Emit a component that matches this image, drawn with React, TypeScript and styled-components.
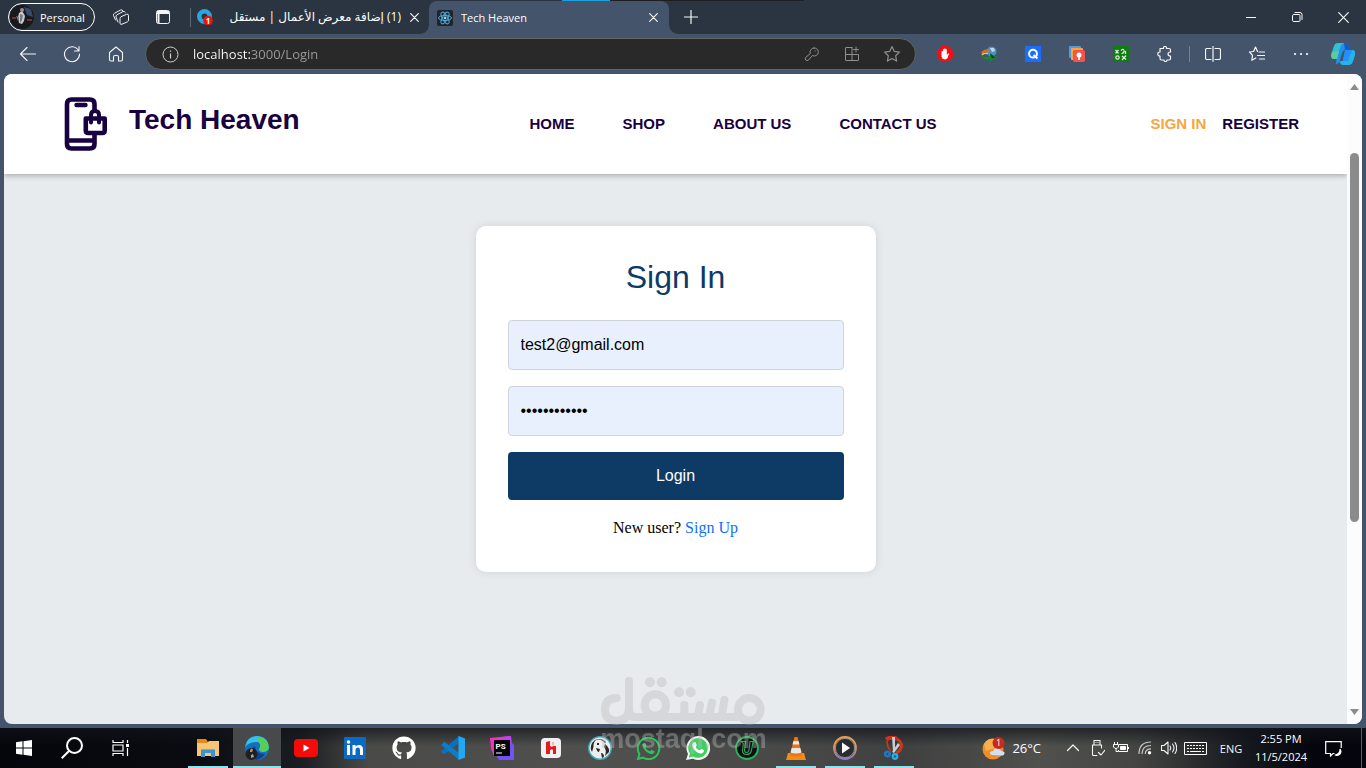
import React, { useState } from "react";
import styled, { createGlobalStyle, css } from "styled-components";
import { FaGithub, FaWhatsapp } from "react-icons/fa";

const ui = `"Open Sans", "Noto Sans", "DejaVu Sans", sans-serif`;
const sans = `"Liberation Sans", Arial, sans-serif`;

const GlobalStyle = createGlobalStyle`
  *, *::before, *::after { box-sizing: border-box; }
  body { margin: 0; background: #44546a; font-family: ${sans}; }
  button { border: 0; padding: 0; background: none; color: inherit; font: inherit; cursor: pointer; }
  a { text-decoration: none; }
  h1, h2, p { margin: 0; }
  svg { display: block; flex: none; }
`;

/* ---------- browser window ---------- */

const Desktop = styled.div`
  position: relative;
  display: flex;
  flex-direction: column;
  min-height: 100vh;
`;

const TabBar = styled.div`
  display: flex;
  align-items: stretch;
  height: 34px;
  padding-left: 8px;
  background: #2b3541;
  color: #fff;
  font: 11px ${ui};
`;

const ProfileButton = styled.button`
  display: flex;
  align-items: center;
  align-self: center;
  gap: 6px;
  width: 87px;
  height: 28px;
  padding-left: 1px;
  border: 1px solid #fff;
  border-radius: 14px;
`;

const BarButton = styled.button<{ $w?: number }>`
  display: flex;
  align-items: center;
  justify-content: center;
  flex: none;
  width: ${(p) => p.$w ?? 44}px;
  color: #f4f5f7;
`;

const ProfileGap = styled.div`
  width: 5px;
`;

const Tab = styled.div<{ $active?: boolean }>`
  position: relative;
  display: flex;
  align-items: center;
  gap: 8px;
  width: 240px;
  padding: 0 10px 0 8px;
  ${(p) =>
    p.$active
      ? css`
          margin-top: 1px;
          border-radius: 8px 8px 0 0;
          background: #44546a;
          &::before,
          &::after {
            content: "";
            position: absolute;
            bottom: 0;
            width: 8px;
            height: 8px;
          }
          &::before {
            right: 100%;
            background: radial-gradient(circle at 0 0, transparent 7px, #44546a 8px);
          }
          &::after {
            left: 100%;
            background: radial-gradient(circle at 100% 0, transparent 7px, #44546a 8px);
          }
        `
      : css`
          &::before {
            content: "";
            position: absolute;
            left: 1px;
            top: 8px;
            bottom: 7px;
            width: 1px;
            background: #5d6672;
          }
        `}
`;

const TabTitle = styled.span`
  flex: 1;
  white-space: nowrap;
  overflow: hidden;
  line-height: 18px;
  &[dir="rtl"] {
    font-family: "Open Sans", "DejaVu Sans", sans-serif;
    font-size: 12px;
  }
`;

const Spacer = styled.div`
  flex: 1;
`;

const CaptureStrip = styled.div`
  position: absolute;
  top: 0;
  left: 50%;
  width: 242px;
  height: 1px;
  transform: translateX(-50%);
  background: linear-gradient(90deg, #1ba1e2 20%, #1d1f22 20%);
`;

const Toolbar = styled.div`
  display: flex;
  height: 40px;
  padding: 0 3px 0 6px;
  background: #44546a;
  color: #f4f5f7;
`;

const AddressBar = styled.div`
  display: flex;
  align-items: center;
  flex: 1;
  height: 32px;
  margin: 4px 7px 4px 7px;
  padding: 0 3px 0 16px;
  border: 1px solid #62645f;
  border-radius: 16px;
  background: #292929;
  ${BarButton} {
    color: #8f8f8f;
  }
`;

/* host name in white, the rest of the address in grey */
const Url = styled.input`
  flex: 1;
  min-width: 0;
  height: 20px;
  margin-left: 14px;
  padding: 0;
  border: 0;
  background: linear-gradient(90deg, #fff 58px, #9c9c9c 58px);
  background-clip: text;
  -webkit-background-clip: text;
  color: transparent;
  caret-color: #fff;
  font: 13px/20px ${ui};
  outline: 0;
`;

const Separator = styled.div`
  align-self: center;
  width: 1px;
  height: 16px;
  margin: 0 1px 0 2px;
  background: #77828f;
`;

const PageFrame = styled.div`
  display: flex;
  flex: 1;
  margin: 0 4px 4px;
  border-radius: 8px;
  overflow: hidden;
  background: #e7ebee;
`;

const Page = styled.div`
  flex: 1;
  min-width: 0;
  overflow: hidden;
`;

const ScrollTrack = styled.div`
  display: flex;
  flex-direction: column;
  align-items: center;
  width: 15px;
  padding: 10px 0 9px;
  background: #fcfcfc;
`;

const ScrollPart = styled.div<{ $grow: number; $thumb?: boolean }>`
  flex: ${(p) => p.$grow} 0 0;
  width: 9px;
  border-radius: 5px;
  background: ${(p) => (p.$thumb ? "#8b8b8b" : "transparent")};
`;

/* ---------- shop page ---------- */

const SiteHeader = styled.header`
  position: relative;
  display: flex;
  align-items: center;
  justify-content: space-between;
  height: 100px;
  padding: 0 48px 0 60px;
  background: #fff;
  box-shadow: 0 2px 5px rgba(0, 0, 0, 0.25);
  color: #190041;
`;

const Brand = styled.a`
  display: flex;
  align-items: center;
  gap: 21px;
  padding-right: 16px;
  color: inherit;
`;

const BrandName = styled.h1`
  padding-bottom: 9px;
  font: bold 28px/32px ${sans};
`;

const Links = styled.nav<{ $gap: number }>`
  display: flex;
  gap: ${(p) => p.$gap}px;
`;

const NavLink = styled.a<{ $current?: boolean }>`
  color: ${(p) => (p.$current ? "#f5a742" : "#190041")};
  font: bold 15px/20px ${sans};
`;

const Main = styled.main`
  display: flex;
  justify-content: center;
  padding: 52px 16px;
`;

const Card = styled.form`
  display: flex;
  flex-direction: column;
  gap: 16px;
  width: 400px;
  padding: 32px;
  border-radius: 10px;
  background: #fff;
  box-shadow: 0 0 10px rgba(0, 0, 0, 0.1);
`;

const CardTitle = styled.h2`
  margin-bottom: 8px;
  color: #0d3b66;
  font: 32px/38px ${sans};
  text-align: center;
`;

const Field = styled.input`
  width: 100%;
  height: 50px;
  padding: 0 12px;
  border: 1px solid #ced4da;
  border-radius: 4px;
  background: #e8f0fe;
  color: #000;
  font: 16px ${sans};
  outline: 0;
`;

const LoginButton = styled.button`
  height: 48px;
  border-radius: 4px;
  background: #0d3b66;
  color: #fff;
  font: 16px ${sans};
`;

const Hint = styled.p`
  font: 16px/24px "Liberation Serif", "Times New Roman", serif;
  text-align: center;
  color: #000;
  a {
    color: #0d6efd;
  }
`;

/* ---------- taskbar ---------- */

const Taskbar = styled.footer`
  display: flex;
  height: 40px;
  background:
    linear-gradient(180deg, rgba(16, 20, 26, 0.7), rgba(16, 20, 26, 0) 45%),
    linear-gradient(90deg, #05060c 0%, #090b11 14%, #1a1d20 22%, #4a4b48 27%, #50504e 44%, #484947 58%, #3f4040 66%, #50514d 76%, #454643 83%, #16191e 91%, #05060d 96%);
  color: #fff;
  font: 11px ${ui};
`;

const Apps = styled.div`
  display: flex;
  flex: 1;
  padding-left: 39px;
`;

const AppButton = styled.button<{ $open?: boolean; $focused?: boolean }>`
  display: flex;
  align-items: center;
  justify-content: center;
  flex: none;
  width: 49px;
  position: relative;
  ${(p) =>
    p.$focused &&
    css`
      background: linear-gradient(90deg, transparent 1px, #47494a 1px);
    `}
  ${(p) =>
    p.$open &&
    css`
      &::after {
        content: "";
        position: absolute;
        left: ${p.$focused ? 1 : 5}px;
        right: ${p.$focused ? 0 : 4}px;
        bottom: 0;
        height: 2px;
        background: #8ee4ea;
      }
    `}
`;

const Weather = styled.button`
  display: flex;
  align-items: center;
  gap: 7px;
  margin-right: 20px;
  font: 13px ${ui};
`;

const Clock = styled.button`
  width: 56px;
  line-height: 18px;
  text-align: center;
  white-space: nowrap;
`;

const ShowDesktop = styled.button`
  width: 5px;
  margin-left: 4px;
  border-left: 1px solid #5c5d60;
`;

const Watermark = styled.div`
  position: absolute;
  left: 50%;
  bottom: 16px;
  width: 167px;
  margin-left: -83px;
  color: #bbb;
  opacity: 0.4;
  pointer-events: none;
  font: bold 27px/26px ${sans};
  text-align: center;
`;

/* ---------- drawings ---------- */

const Line = ({ d, s = 16, w = 1 }: { d: string; s?: number; w?: number }) => (
  <svg width={s} height={s} viewBox={`0 0 ${s} ${s}`} fill="none" stroke="currentColor" strokeWidth={w} strokeLinecap="round" strokeLinejoin="round">
    <path d={d} />
  </svg>
);

const Close = ({ s = 9 }: { s?: number }) => <Line s={s} d={`M.7.7 ${s - 0.7} ${s - 0.7}M${s - 0.7}.7.7 ${s - 0.7}`} w={1.2} />;

const Avatar = () => (
  <svg width="24" height="24" viewBox="0 0 24 24">
    <clipPath id="av"><circle cx="12" cy="12" r="12" /></clipPath>
    <g clipPath="url(#av)">
      <path fill="#17191d" d="M0 0h24v24H0z" />
      <path fill="#344a72" d="M14 2l7 2 2 8-6-2z" />
      <path fill="#733033" d="M2 12h4v2H2zM17 14h5v2h-5z" />
      <path fill="#c8c9cc" d="M9 8l3-2 2 3 1 2-1 5-2 3-3-1-1-6z" />
      <path fill="#777b83" d="M10 9l3 1-1 5-2 3zM6 11l3 1-1 4z" />
      <circle cx="12" cy="5" r="2" fill="#ab8d7e" />
    </g>
  </svg>
);

const Logo = () => (
  <svg width="44" height="54" viewBox="0 0 44 54" fill="none" stroke="#190041" strokeWidth="4.6" strokeLinejoin="round" strokeLinecap="round">
    <path d="M30.500 13V7q0-4.500-4.500-4.500H7.500Q3 2.500 3 7v40q0 4.500 4.500 4.500H26q4.500 0 4.500-4.500v-9" />
    <path d="M12.500 8h9M4 43.500h26" strokeWidth="4.400" />
    <path d="M21.800 21.500h18.900v12q0 2.500-2.500 2.500H24.300q-2.500 0-2.500-2.500z" />
    <path d="M27 25.500V18q0-4 4-4t4 4v7.500" strokeWidth="4" />
    <path d="M29.500 21.500h3" strokeWidth="3" />
  </svg>
);

const ReactIcon = () => (
  <svg width="16" height="16" viewBox="0 0 16 16">
    <rect width="16" height="16" rx="2" fill="#20232a" />
    <g fill="none" stroke="#4fa9d6" strokeWidth="1">
      <ellipse cx="8" cy="8" rx="6.500" ry="2.600" />
      <ellipse cx="8" cy="8" rx="6.500" ry="2.600" transform="rotate(60 8 8)" />
      <ellipse cx="8" cy="8" rx="6.500" ry="2.600" transform="rotate(120 8 8)" />
    </g>
    <circle cx="8" cy="8" r="1.400" fill="#8cd8f8" />
  </svg>
);

const MostaqlIcon = () => (
  <svg width="16" height="16" viewBox="0 0 16 16">
    <circle cx="7.500" cy="7.500" r="5.200" fill="none" stroke="#2aa5de" strokeWidth="4.600" />
    <circle cx="11" cy="11.500" r="4.800" fill="#e2160f" />
    <text x="11" y="14.500" fontSize="8" fontWeight="bold" fill="#fff" textAnchor="middle" fontFamily="Open Sans">1</text>
  </svg>
);

const AdBlock = () => (
  <svg width="16" height="16" viewBox="0 0 16 16">
    <path fill="#f40d12" d="M5 0h6l5 5v6l-5 5H5l-5-5V5z" />
    <path fill="#fff" d="M4.500 5.500q.8-.8 1.400 0V8V3.500q.8-.9 1.300 0V7V2.700q.8-.9 1.300 0V7V3.500q.8-.9 1.300 0V9l1.200-1.600q.9-.5 1 .3L10.500 12q-.8 1.400-2.600 1.400-2.800 0-3.400-2.600z" />
  </svg>
);

const Idm = () => (
  <svg width="16" height="16" viewBox="0 0 16 16">
    <circle cx="10.500" cy="5.500" r="5" fill="#4d8fc5" />
    <path d="M9 2h4l1 3-3 1z" fill="#b9dbe9" />
    <path d="M1 7.500q2-4 7-2.500" fill="none" stroke="#e26b1f" strokeWidth="2.200" />
    <path d="M1 9q2-2.500 6-1.500" fill="none" stroke="#e6c93b" strokeWidth="1.600" />
    <path d="M.5 9.500q3 3 8.500.5V7.500L16 11l-7 5v-2.500Q2 14.500.5 9.500z" fill="#158a33" />
    <path d="M9 7.500l5 4-3 1z" fill="#18341e" />
  </svg>
);

const QExt = () => (
  <svg width="16" height="16" viewBox="0 0 16 16">
    <path fill="#1a6dff" d="M0 0h16v16H0z" />
    <circle cx="8" cy="7.700" r="3.900" fill="none" stroke="#fff" strokeWidth="2" />
    <path d="M8.500 9l4 3.500" stroke="#fff" strokeWidth="2" />
  </svg>
);

const StackExt = () => (
  <svg width="16" height="16" viewBox="0 0 16 16">
    <rect width="12" height="12" rx="1" fill="#4b9fe1" />
    <rect x="2" y="2" width="12" height="12" rx="1" fill="#f9a33a" />
    <rect x="4" y="4" width="12" height="12" rx="2" fill="#f2544c" />
    <circle cx="10" cy="9" r="2.500" fill="#fff" />
    <path d="M9 11h2v3H9z" fill="#fde2df" />
  </svg>
);

const GreenExt = () => (
  <svg width="16" height="16" viewBox="0 0 16 16">
    <path fill="#107c10" d="M0 0h16v16H0z" />
    <g fill="none" stroke="#dff0df" strokeWidth="1.200">
      <path d="M2.500 4l3 3.500M5.500 4l-3 3.500M8 4.500q2.500-2.500 3 0t-2.500 3M12.500 5v3" />
      <circle cx="4.500" cy="11.500" r="1.700" />
      <path d="M9 10l4 3.500M13 9.500l-4 4.500" />
    </g>
  </svg>
);

const Copilot = () => (
  <svg width="24" height="24" viewBox="0 0 24 24">
    <path fill="#2092e9" d="M7 1h8q2 0 3 3l1 4h-5q-2 0-3 3l-2 7q-1 4-4 4z" />
    <path fill="#33c0d5" d="M7 1h6q-3 1-4 5L6 17H3q-3 0-3-4L3 4q1-3 4-3z" />
    <path fill="#5ccb9f" d="M1 10l7-1-2 8H3q-4 0-2-7z" />
    <path fill="#1659c9" d="M13 1h2q2 0 3 3l1 4h-5z" />
    <path fill="#248fff" d="M14 8h7q4 0 3 5l-2 6q-1 4-5 4h-5q-3 0-4-4l2 1q2 0 2-3z" />
    <path fill="#24b5e3" d="M9 19h8l4-11q4 0 3 5l-2 6q-1 4-5 4h-5q-2 0-3-4z" />
  </svg>
);

const Folder = () => (
  <svg width="22" height="20" viewBox="0 0 22 20">
    <path fill="#e68a12" d="M0 1h9l2 3h11v5H0z" />
    <path fill="#f8c574" d="M0 5h10l2-2h10v15H0z" />
    <path fill="#3c93d0" d="M4 11h14v8h-4v-4H8v4H4z" />
    <path fill="#64b0e3" d="M4 11h14v1H4z" />
  </svg>
);

const Edge = () => (
  <svg width="24" height="24" viewBox="0 0 24 24">
    <circle cx="12" cy="12" r="12" fill="#1470bf" />
    <path fill="#35c0e8" d="M0 11Q2 0 12 0q8 0 11 7l-10-1Q4 6 0 11z" />
    <path fill="#54cf5e" d="M14 1q10 2 10 11-1 4-6 4-4 0-4-3 3-5-2-8z" />
    <path fill="#123f8c" d="M10 10q0 8 10 8-3 5-9 6Q4 20 7 12z" />
    <circle cx="6.500" cy="18" r="6" fill="#202024" />
    <path fill="#b28e75" d="M5 14q2-3 3 0l-1 2H5z" />
    <path fill="#a3a3a3" d="M6 19l2-1 1 3-3 1z" />
  </svg>
);

const YouTube = () => (
  <svg width="24" height="18" viewBox="0 0 24 18">
    <rect width="24" height="18" rx="4" fill="#f60b0b" />
    <path fill="#fff" d="M9.500 5.500v7l6-3.500z" />
  </svg>
);

const LinkedIn = () => (
  <svg width="22" height="22" viewBox="0 0 22 22">
    <rect width="22" height="22" rx="1" fill="#0a6ac4" />
    <path fill="#fff" d="M3 8h3v10H3zM8.500 8h3v1.500Q12.500 8 15 8q4 0 4 4.500V18h-3v-5q0-2.500-2-2.500-2.500 0-2.500 2.500v5h-3z" />
    <circle cx="4.500" cy="5" r="1.800" fill="#fff" />
  </svg>
);

const VsCode = () => (
  <svg width="24" height="24" viewBox="0 0 24 24">
    <path fill="#0b6fc0" d="M18 0v7L3 18.500 0 16l1-1.500L17 1z" />
    <path fill="#0a7dcc" d="M3 5.500L18 17v7L.5 9z" />
    <path fill="#23a7f2" d="M17.500 0L24 2.500v19L17.500 24z" />
  </svg>
);

const PhpStorm = () => (
  <svg width="24" height="24" viewBox="0 0 24 24">
    <path fill="#ef35c0" d="M0 2l21-2 1 9L4 20 1 13z" />
    <path fill="#b945f0" d="M12 1l9-1v12l-9 2z" />
    <path fill="#7353f5" d="M4 16L22 7l2 2v15H9z" />
    <path fill="#050505" d="M4 4h16v16H4z" />
    <text x="5.500" y="12.500" fontSize="8" fontWeight="bold" fill="#fff" fontFamily="Roboto">PS</text>
    <path fill="#fff" d="M6 16.500h6v1H6z" />
  </svg>
);

const HIcon = () => (
  <svg width="20" height="20" viewBox="0 0 20 20">
    <rect width="20" height="20" rx="4" fill="#f1efef" />
    <path fill="#e51b1b" d="M5 4l4-1v5l2 1 1-1h3v8h-3v-4q-1.500-1.500-3 .5V16H5z" />
    <path fill="#f5b9a9" d="M11 4h2v3h-2z" />
  </svg>
);

const Beaver = () => (
  <svg width="24" height="24" viewBox="0 0 24 24">
    <circle cx="12" cy="12" r="11.300" fill="#eceff0" stroke="#3fa9b8" strokeWidth="1.400" />
    <path fill="#33251f" d="M8 4Q5 7 5.500 11L4 16Q1.500 12 4 7l3-3q6-3 11 2l-1 1Q13 2 8 4zM17 8q5 4 4 8l-4 4q2-6-1-9zM8 12l4 1-1 3q-2 0-3-4z" />
    <path fill="#33251f" d="M9 7h2v2H9zM13 17q3 0 3 4l-2 1z" />
  </svg>
);

const WhatsAppSolid = () => (
  <svg width="24" height="24" viewBox="0 0 24 24">
    <path fill="#f3f5f3" d="M12 0a12 12 0 1 1-5 22.800L0 24l2-6A12 12 0 0 1 12 0z" />
    <path fill="#3fcf60" d="M12 2.200a9.800 9.800 0 1 1-5 18.300L2.800 21.500 4 17.500A9.800 9.800 0 0 1 12 2.200z" />
    <path fill="#fff" d="M8 6.200h1.500l1.300 3-1.200 1.700q1.300 2.400 4 3.500l1.500-1.700 2.900 1.400q.3 2.500-2.200 3.300-3 .6-6.300-2.400-3.600-3.300-3.300-6.300.2-1.700 1.800-2.500z" />
  </svg>
);

const UIcon = () => (
  <svg width="24" height="24" viewBox="0 0 24 24">
    <circle cx="12" cy="12" r="11" fill="#0b1114" stroke="#2cb45a" strokeWidth="1.800" />
    <path d="M6.500 5.500h4L9.500 14q0 2.500 2 2.500t2.500-2.500l1-8.500h3l-1.500 9q-1 4-5 4t-4-4l.8-7z" fill="none" stroke="#39a55a" strokeWidth="1.100" />
  </svg>
);

const Vlc = () => (
  <svg width="20" height="23" viewBox="0 0 20 23">
    <path fill="#f58a14" d="M2 16h16l2 7H0z" />
    <path fill="#ee7414" d="M8.500 0h3L16 18q-6 3-12 0z" />
    <path fill="#e9e8e6" d="M7.500 4h5l1 3.500h-7zM5.700 11h8.600l1.200 4.500q-5.500 2-11 0z" />
  </svg>
);

const Player = () => (
  <svg width="24" height="24" viewBox="0 0 24 24">
    <linearGradient id="pl" x2="0" y2="1"><stop offset=".3" stopColor="#f09b4a" /><stop offset="1" stopColor="#8d78c9" /></linearGradient>
    <circle cx="12" cy="12" r="11" fill="#2a2c30" stroke="url(#pl)" strokeWidth="1.800" />
    <circle cx="12" cy="12" r="9.600" fill="none" stroke="#c9c9c9" strokeWidth=".6" />
    <path fill="#fff" d="M9 6.500v11l8-5.500z" />
  </svg>
);

const Snip = () => (
  <svg width="20" height="24" viewBox="0 0 20 24">
    <path d="M2 3.500Q7 0 13 3" fill="none" stroke="#d4301a" strokeWidth="4" />
    <path d="M13 3q6 4 4 9-1 4-5 5" fill="none" stroke="#c93a1c" strokeWidth="3" />
    <path d="M3 5q0 6 4 10" fill="none" stroke="#c93a1c" strokeWidth="1.600" />
    <path fill="#c9ccd0" d="M8 1h3v15H9zM14 7l2 2-6 8-2-1z" />
    <circle cx="3.500" cy="18" r="2.300" fill="none" stroke="#1f77c4" strokeWidth="2.600" />
    <circle cx="11" cy="20.500" r="2.200" fill="none" stroke="#23aee8" strokeWidth="2.400" />
  </svg>
);

const WeatherIcon = () => (
  <svg width="23" height="23" viewBox="0 0 23 23">
    <circle cx="11" cy="12" r="10.500" fill="#ef8d2a" />
    <path fill="#f9b14a" d="M2 7q4-6 10-5l4 8-12 4z" />
    <path fill="#cfe0f7" d="M10 18q-2 0-2-2t3-2q1-3 4-3t4 3q4 0 3.500 2.500T20 18.500z" />
    <circle cx="16.500" cy="6" r="6" fill="#c62b1c" />
    <text x="16.500" y="9.300" fontSize="9" fill="#fff" textAnchor="middle" fontFamily="Open Sans">1</text>
  </svg>
);

const MostaqlMark = () => (
  <svg width="167" height="50" viewBox="690 18 501 150" fill="none" stroke="currentColor" strokeWidth="24" strokeLinecap="round" strokeLinejoin="round">
    <path d="M740 84Q705 84 705 118T740 153Q777 150 777 115V33V115Q777 141 795 141H1100M943 141V105M984 141L990 105M1017 141L1026 98M1055 141L1063 90" />
    <circle cx="856" cy="105" r="32" />
    <circle cx="1138" cy="118" r="34" />
    <path d="M840 37h.1M875 37h.1M927 67h.1M962 67h.1" strokeWidth="30" />
  </svg>
);

export default function App() {
  const [address, setAddress] = useState("localhost:3000/Login");
  const [email, setEmail] = useState("test2@gmail.com");
  const [password, setPassword] = useState("password1234");

  return (
    <Desktop>
      <GlobalStyle />
      <TabBar>
        <ProfileButton><Avatar />Personal</ProfileButton>
        <ProfileGap />
        <BarButton $w={42} aria-label="Workspaces">
          <Line s={18} w={1} d="M3.500 12L1.500 7.500Q1 6 2.500 5.300L8.500 2q1.500-.6 2.300.5M6 14L4 9Q3.500 7.500 5 6.800L11 3.500q1.500-.5 2.300.8M9.500 8.500l5-2.200q2-.6 2 1V12q0 1.300-1 1.800L10 16.200q-2 .6-2-1V10.500q0-1.300 1.500-2z" />
        </BarButton>
        <BarButton $w={42} aria-label="Tab actions">
          <svg width="16" height="16" viewBox="0 0 16 16" fill="none" stroke="currentColor"><rect x="1.500" y="1.500" width="13" height="13" rx="2" /><path d="M2 3.500h12" strokeWidth="3" /><path d="M3.500 5v9" strokeWidth="2" /></svg>
        </BarButton>
        <ProfileGap />
        <Tab>
          <MostaqlIcon />
          <TabTitle dir="rtl" lang="ar">(1) إضافة معرض الأعمال | مستقل</TabTitle>
          <BarButton $w={10} aria-label="Close tab"><Close /></BarButton>
        </Tab>
        <Tab $active>
          <ReactIcon />
          <TabTitle>Tech Heaven</TabTitle>
          <BarButton $w={12} aria-label="Close tab"><Close /></BarButton>
        </Tab>
        <BarButton aria-label="New tab"><Line s={14} d="M7 .5v13M.5 7h13" w={1.2} /></BarButton>
        <Spacer />
        <BarButton $w={46} aria-label="Minimize"><Line s={10} d="M0 5.500h10" /></BarButton>
        <BarButton $w={46} aria-label="Restore"><Line s={12} d="M3 3.500h5q1 0 1 1v5q0 1-1 1H3q-1.500 0-1.500-1v-5q0-1 1.500-1zM4 1.500h5q2 0 2 2v5" /></BarButton>
        <BarButton $w={46} aria-label="Close window"><Close s={11} /></BarButton>
      </TabBar>
      <CaptureStrip />

      <Toolbar>
        <BarButton aria-label="Back"><Line d="M.5 8h15M7 1.500L.5 8 7 14.500" w={1.1} /></BarButton>
        <BarButton aria-label="Refresh"><Line s={18} d="M15.500 5.500A7.500 7.500 0 1 0 16.500 9M16 1.500v4.500h-4.500" w={1.1} /></BarButton>
        <BarButton aria-label="Home"><Line d="M1.500 6.500L8 1l6.500 5.500v7q0 1.500-1.500 1.500h-2.500v-4q0-1.500-1.500-1.500H7Q5.500 9.500 5.500 11v4H3q-1.500 0-1.500-1.500z" w={1.1} /></BarButton>
        <AddressBar>
          <svg width="17" height="17" viewBox="0 0 17 17" fill="none" stroke="#d0d0d0"><circle cx="8.500" cy="8.500" r="7.500" /><path d="M8.500 7.500v5M8.500 4.500v1.200" strokeWidth="1.200" /></svg>
          <Url type="text" aria-label="Address" spellCheck={false} value={address} onChange={(e) => setAddress(e.target.value)} />
          <BarButton $w={40} aria-label="Saved passwords"><Line d="M10 2a4 4 0 1 1-1.500 7.500L4.500 14Q3 15 1.800 14t-.2-2.500L6.300 7.500A4 4 0 0 1 10 2zM11 5h.1" w={1} /></BarButton>
          <BarButton $w={40} aria-label="Apps"><Line d="M8 1.500H2q-.5 0-.5.500v12q0 .5.500.5h12q.5 0 .5-.5V8.500H1.500M8 1.500v13M12 1v5M9.500 3.500h5" w={1} /></BarButton>
          <BarButton $w={40} aria-label="Add to favorites"><Line s={18} d="M9 1.500l2.300 4.900 5.200.7-3.800 3.700.9 5.300L9 13.500l-4.600 2.600.9-5.300L1.500 7.100l5.200-.7z" w={1.2} /></BarButton>
        </AddressBar>
        <BarButton aria-label="Ad blocker"><AdBlock /></BarButton>
        <BarButton aria-label="Download manager"><Idm /></BarButton>
        <BarButton aria-label="Search extension"><QExt /></BarButton>
        <BarButton aria-label="Notes extension"><StackExt /></BarButton>
        <BarButton aria-label="Capture extension"><GreenExt /></BarButton>
        <BarButton aria-label="Extensions"><Line d="M3 2.500h3.500q-.3-2 1.500-2t1.500 2H12q1.500 0 1.500 1.500v2q-2.500 0-2.500 2t2.500 2v2.500q0 1.500-1.500 1.500h-2q0 1.500-1.500 1.500T7 14H4.500Q3 14 3 12.500V10Q.8 10 .8 8T3 6z" w={1.2} /></BarButton>
        <Separator />
        <BarButton aria-label="Split screen"><Line d="M6 2.500H2q-1.500 0-1.500 1.500v8q0 1.500 1.500 1.500h4M10 2.500h4q1.500 0 1.500 1.500v8q0 1.500-1.500 1.500h-4M8 .5v15" w={1.2} /></BarButton>
        <BarButton aria-label="Favorites"><Line d="M8.500 5.500L6.500 1 4.600 5.500.5 6l3 3.300-.7 5 4-2.300M10 6h5.500M8.500 9.500h7M10.500 13h5" w={1.2} /></BarButton>
        <BarButton aria-label="Settings and more"><Line d="M2 8h.1M8 8h.1M14 8h.1" w={2.2} /></BarButton>
        <BarButton $w={40} aria-label="Copilot"><Copilot /></BarButton>
      </Toolbar>

      <PageFrame>
        <Page>
          <SiteHeader>
            <Brand href="#"><Logo /><BrandName>Tech Heaven</BrandName></Brand>
            <Links $gap={48}>
              <NavLink href="#">HOME</NavLink>
              <NavLink href="#">SHOP</NavLink>
              <NavLink href="#">ABOUT US</NavLink>
              <NavLink href="#">CONTACT US</NavLink>
            </Links>
            <Links $gap={16}>
              <NavLink href="#" $current>SIGN IN</NavLink>
              <NavLink href="#">REGISTER</NavLink>
            </Links>
          </SiteHeader>
          <Main>
            <Card onSubmit={(e) => e.preventDefault()}>
              <CardTitle>Sign In</CardTitle>
              <Field type="email" aria-label="Email" value={email} onChange={(e) => setEmail(e.target.value)} />
              <Field type="password" aria-label="Password" value={password} onChange={(e) => setPassword(e.target.value)} />
              <LoginButton type="submit">Login</LoginButton>
              <Hint>New user? <a href="#">Sign Up</a></Hint>
            </Card>
          </Main>
        </Page>
        <ScrollTrack>
          <svg width="9" height="6" viewBox="0 0 9 6"><path d="M0 6l4.500-6L9 6z" fill="#8b8b8b" /></svg>
          <ScrollPart $grow={63} />
          <ScrollPart $grow={369} $thumb />
          <ScrollPart $grow={187} />
          <svg width="9" height="6" viewBox="0 0 9 6"><path d="M0 0l4.500 6L9 0z" fill="#8b8b8b" /></svg>
        </ScrollTrack>
      </PageFrame>

      <Taskbar>
        <BarButton $w={48} aria-label="Start">
          <svg width="16" height="16" viewBox="0 0 16 16" fill="#fff"><path d="M0 2.200L6.500 1.300v6.200H0zM7.500 1.200L16 0v7.500H7.500zM0 8.500h6.500v6.200L0 13.800zM7.500 8.500H16V16l-8.500-1.200z" /></svg>
        </BarButton>
        <BarButton $w={48} aria-label="Search">
          <svg width="22" height="22" viewBox="0 0 22 22" fill="none" stroke="#fff" strokeWidth="2"><circle cx="13.500" cy="8.500" r="7.500" /><path d="M8 14L.7 21.300" /></svg>
        </BarButton>
        <BarButton $w={48} aria-label="Task view">
          <svg width="17" height="16" viewBox="0 0 17 16" fill="none" stroke="#fff" strokeWidth="1.200"><path d="M1 0v2.500h10V0M1 16v-2.500h10V16M1 5h10v6H1zM15.500 0v3M15.500 8v8" /><path d="M14 4h3v3h-3z" fill="#fff" stroke="none" /></svg>
        </BarButton>
        <Apps>
          <AppButton $open aria-label="File Explorer"><Folder /></AppButton>
          <AppButton $open $focused aria-label="Edge"><Edge /></AppButton>
          <AppButton aria-label="YouTube"><YouTube /></AppButton>
          <AppButton aria-label="LinkedIn"><LinkedIn /></AppButton>
          <AppButton aria-label="GitHub"><FaGithub size={24} /></AppButton>
          <AppButton aria-label="Code editor"><VsCode /></AppButton>
          <AppButton aria-label="PhpStorm"><PhpStorm /></AppButton>
          <AppButton aria-label="Heidi"><HIcon /></AppButton>
          <AppButton aria-label="Database"><Beaver /></AppButton>
          <AppButton aria-label="WhatsApp"><FaWhatsapp size={27} color="#2cc35c" /></AppButton>
          <AppButton aria-label="WhatsApp Beta"><WhatsAppSolid /></AppButton>
          <AppButton aria-label="Uninstaller"><UIcon /></AppButton>
          <AppButton $open aria-label="VLC"><Vlc /></AppButton>
          <AppButton $open aria-label="Media player"><Player /></AppButton>
          <AppButton $open aria-label="Snipping tool"><Snip /></AppButton>
        </Apps>
        <Weather><WeatherIcon />26°C</Weather>
        <BarButton $w={24} aria-label="Hidden icons"><Line s={12} d="M.5 8.500L6 3l5.500 5.500" w={1.2} /></BarButton>
        <BarButton $w={24} aria-label="USB"><Line d="M5 5V.5h6V5M3.500 5h9v3M3.500 5v9.500q0 1 1 1H8M7 2.500h.1M9 2.500h.1M9.500 12.500l2.500 2.500 4-5" w={1.1} /></BarButton>
        <BarButton $w={24} aria-label="Battery">
          <svg width="16" height="12" viewBox="0 0 16 12" fill="none" stroke="#fff"><path d="M6 2.500h8.500v7h-9V8M1.500 0v2M4.500 0v2M.5 2.500h5V5q-1 1.500-2.500 1.500T.5 5zM3 6.500v3h2" /><path d="M7.500 4.500h5v3h-5z" fill="#fff" /><path d="M15.500 5v2" /></svg>
        </BarButton>
        <BarButton $w={24} aria-label="Wi-Fi">
          <svg width="14" height="14" viewBox="0 0 14 14" fill="none" stroke="#c8c8c8" strokeWidth="1.200"><path d="M1 13Q1 1 13 1M4 13q0-8.500 9-8.500M7.300 13q0-5.200 5.700-5.200" /><circle cx="11.500" cy="11.800" r="1.700" fill="#fff" stroke="none" /></svg>
        </BarButton>
        <BarButton $w={24} aria-label="Volume"><Line d="M.5 5.500h2.500L7 2v12L3 10.500H.5zM9 6q1.500 2 0 4M11.500 4q3 4 0 8M14 2.500q3.500 5.500 0 11" w={1.1} /></BarButton>
        <BarButton $w={28} aria-label="Touch keyboard">
          <svg width="23" height="13" viewBox="0 0 23 13" fill="none" stroke="#fff"><path d="M.5.5h22v12H.5z" /><path d="M3 3.500h17M3 6.500h17" strokeDasharray="2 1" /><path d="M3 9.500h2M6 9.500h11M18 9.500h2" /></svg>
        </BarButton>
        <BarButton $w={44}>ENG</BarButton>
        <Clock>2:55 PM<br />11/5/2024</Clock>
        <BarButton $w={48} aria-label="Notifications">
          <svg width="17" height="17" viewBox="0 0 17 17" fill="none" stroke="#fff" strokeWidth="1.200"><path d="M9.500 13.500H8l-2.500 2.500v-2.500H.7V1.700h15.500V8" /><path d="M15 9q2 3-.5 5.500-2.500 1.500-4 .5l3-1.500q1.800-2 1.500-4.500z" fill="#fff" /></svg>
        </BarButton>
        <ShowDesktop aria-label="Show desktop" />
      </Taskbar>

      <Watermark><MostaqlMark />mostaql.com</Watermark>
    </Desktop>
  );
}
